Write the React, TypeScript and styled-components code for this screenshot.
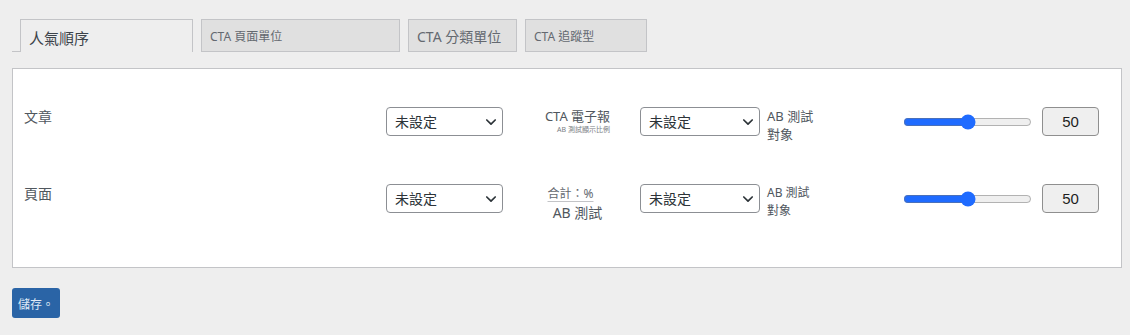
import React from "react";
import styled, { createGlobalStyle } from "styled-components";

const Global = createGlobalStyle`
  html, body { margin: 0; padding: 0; background: #eeeeee; }
  body { font-family: "Noto Sans", "Noto Sans CJK TC", sans-serif; color: #50575e; }
  * { box-sizing: border-box; }
`;

const Page = styled.div`
  padding: 19px 8px 0 12px;
`;

const TabBar = styled.div`
  display: flex;
  align-items: flex-end;
  height: 33px;
`;

const TabLead = styled.div`
  width: 8px;
  align-self: stretch;
  border-bottom: 1px solid #c3c4c7;
`;

const Tab = styled.div<{ $active?: boolean; $w: number; $fs: number }>`
  width: ${(p) => p.$w}px;
  height: 33px;
  margin-right: 8px;
  display: flex;
  align-items: center;
  padding: ${(p) => (p.$active ? "2px 0 0 8px" : "1px 0 0 8px")};
  font-size: ${(p) => p.$fs}px;
  color: ${(p) => (p.$active ? "#3c434a" : "#646970")};
  background: ${(p) => (p.$active ? "#eeeeee" : "#e0e0e0")};
  border: 1px solid #c3c4c7;
  border-bottom: ${(p) => (p.$active ? "none" : "1px solid #c3c4c7")};
  white-space: nowrap;
`;

const Panel = styled.div`
  margin-top: 16px;
  height: 200px;
  background: #fff;
  border: 1px solid #c3c4c7;
  padding: 38px 0 0 11px;
`;

const Row = styled.div`
  display: flex;
  align-items: flex-start;
  height: 77px;
`;

const Label = styled.div`
  width: 362px;
  font-size: 14px;
  line-height: 20px;
  color: #50575e;
`;

const SelectWrap = styled.div<{ $w: number }>`
  position: relative;
  width: ${(p) => p.$w}px;
  height: 29px;
`;

const Select = styled.select`
  appearance: none;
  width: 100%;
  height: 29px;
  border: 1px solid #8c8f94;
  border-radius: 4px;
  background: #fff;
  font-family: "Noto Sans CJK TC", "Noto Sans", sans-serif;
  font-size: 14px;
  color: #2c3338;
  padding: 0 0 0 8px;
  line-height: 27px;
`;

const Chevron = styled.svg`
  position: absolute;
  right: 6px;
  top: 9px;
  width: 12px;
  height: 12px;
  pointer-events: none;
`;

const Middle = styled.div`
  width: 137px;
  display: flex;
  flex-direction: column;
  align-items: center;
`;

const MidMain = styled.div<{ $shift?: number }>`
  font-size: 13px;
  line-height: 18px;
  color: #50575e;
  transform: translateX(${(p) => p.$shift ?? 0}px);
`;

const MidHint = styled.div`
  font-size: 7px;
  line-height: 10px;
  color: #787c82;
  transform: translateX(12px);
`;

const Total = styled.span`
  font-size: 12px;
  line-height: 20px;
  color: #646970;
  text-decoration: underline;
  text-decoration-color: #c3c4c7;
  text-underline-offset: 3px;
  transform: translateX(-1px);
`;

const MidSub = styled.div`
  font-size: 14px;
  line-height: 18px;
  color: #50575e;
  transform: translateX(6px);
`;

const Target = styled.div<{ $fs: number }>`
  width: 143px;
  padding-left: 7px;
  font-size: ${(p) => p.$fs}px;
  line-height: 18px;
  color: #50575e;
`;

const Range = styled.input`
  width: 129px;
  margin: 7px 0 0 0;
  accent-color: #1f6bff;
`;

const NumBox = styled.div`
  margin-left: 10px;
  width: 57px;
  height: 29px;
  border: 1px solid #8f8f8f;
  border-radius: 4px;
  background: #efefef;
  display: flex;
  align-items: center;
  justify-content: center;
  font-family: "Liberation Sans", Arial, sans-serif;
  font-size: 15px;
  color: #1e1e1e;
`;

const SaveButton = styled.button`
  margin-top: 20px;
  width: 48px;
  height: 30px;
  border: none;
  border-radius: 3px;
  background: #2a64a6;
  color: #dfe9f5;
  font-family: "Noto Sans CJK TC", "Noto Sans", sans-serif;
  font-size: 12px;
  padding: 0;
`;

const ChevronIcon = () => (
  <Chevron viewBox="0 0 12 12">
    <path d="M1.8 4 L6 8.2 L10.2 4" fill="none" stroke="#2c3338" strokeWidth="1.7" strokeLinecap="round" strokeLinejoin="round" />
  </Chevron>
);

const Dropdown = ({ w }: { w: number }) => (
  <SelectWrap $w={w}>
    <Select defaultValue="none">
      <option value="none">未設定</option>
    </Select>
    <ChevronIcon />
  </SelectWrap>
);

export default function App() {
  return (
    <Page>
      <Global />
      <TabBar>
        <TabLead />
        <Tab $active $w={173} $fs={15}>人氣順序</Tab>
        <Tab $w={199} $fs={12}>CTA 頁面單位</Tab>
        <Tab $w={109} $fs={14}>CTA 分類單位</Tab>
        <Tab $w={122} $fs={12}>CTA 追蹤型</Tab>
      </TabBar>
      <Panel>
        <Row>
          <Label>文章</Label>
          <Dropdown w={117} />
          <Middle>
            <MidMain $shift={6}>CTA 電子報</MidMain>
            <MidHint>AB 測試顯示比例</MidHint>
          </Middle>
          <Dropdown w={120} />
          <Target $fs={13}>
            AB 測試
            <br />
            對象
          </Target>
          <Range type="range" min={0} max={100} defaultValue={50} />
          <NumBox>50</NumBox>
        </Row>
        <Row>
          <Label>頁面</Label>
          <Dropdown w={117} />
          <Middle>
            <Total>合計：%</Total>
            <MidSub>AB 測試</MidSub>
          </Middle>
          <Dropdown w={120} />
          <Target $fs={12}>
            AB 測試
            <br />
            對象
          </Target>
          <Range type="range" min={0} max={100} defaultValue={50} />
          <NumBox>50</NumBox>
        </Row>
      </Panel>
      <SaveButton>儲存。</SaveButton>
    </Page>
  );
}
